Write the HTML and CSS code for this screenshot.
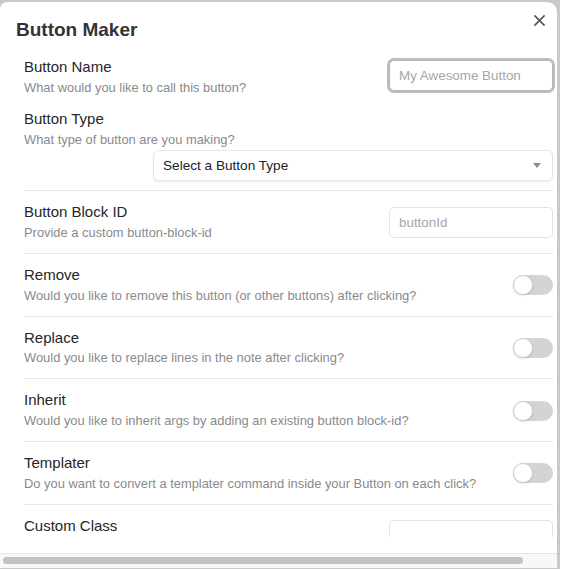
FILE: index.html
```html
<!DOCTYPE html>
<html lang="en">
<head>
<meta charset="utf-8">
<title>Button Maker</title>
<link rel="stylesheet" href="styles.css">
</head>
<body>
<div class="backdrop">
  <div class="modal">
    <button class="close" aria-label="Close">
      <svg viewBox="0 0 12 12" width="11" height="11"><path d="M1 1L11 11M11 1L1 11" stroke="#555" stroke-width="1.8" stroke-linecap="round" fill="none"/></svg>
    </button>
    <h1 class="title">Button Maker</h1>
    <div class="content">
      <div class="setting first">
        <div class="info">
          <div class="name">Button Name</div>
          <div class="desc">What would you like to call this button?</div>
        </div>
        <div class="control"><input class="text focused" type="text" placeholder="My Awesome Button"></div>
      </div>
      <div class="setting wrap">
        <div class="info">
          <div class="name">Button Type</div>
          <div class="desc">What type of button are you making?</div>
        </div>
        <div class="control">
          <div class="dropdown"><span>Select a Button Type</span><span class="arrow"></span></div>
        </div>
      </div>
      <div class="setting">
        <div class="info">
          <div class="name">Button Block ID</div>
          <div class="desc">Provide a custom button-block-id</div>
        </div>
        <div class="control"><input class="text" type="text" placeholder="buttonId"></div>
      </div>
      <div class="setting">
        <div class="info">
          <div class="name">Remove</div>
          <div class="desc">Would you like to remove this button (or other buttons) after clicking?</div>
        </div>
        <div class="control"><div class="toggle"></div></div>
      </div>
      <div class="setting">
        <div class="info">
          <div class="name">Replace</div>
          <div class="desc">Would you like to replace lines in the note after clicking?</div>
        </div>
        <div class="control"><div class="toggle"></div></div>
      </div>
      <div class="setting">
        <div class="info">
          <div class="name">Inherit</div>
          <div class="desc">Would you like to inherit args by adding an existing button block-id?</div>
        </div>
        <div class="control"><div class="toggle"></div></div>
      </div>
      <div class="setting">
        <div class="info">
          <div class="name">Templater</div>
          <div class="desc">Do you want to convert a templater command inside your Button on each click?</div>
        </div>
        <div class="control"><div class="toggle"></div></div>
      </div>
      <div class="setting last">
        <div class="info">
          <div class="name">Custom Class</div>
        </div>
        <div class="control"><input class="text" type="text"></div>
      </div>
    </div>
    <div class="hscroll"><div class="thumb"></div></div>
  </div>
</div>
</body>
</html>
```
FILE: styles.css
```css
html, body {
  margin: 0;
  padding: 0;
  background: #ffffff;
  font-family: "Liberation Sans", Arial, sans-serif;
}

.backdrop {
  width: 560px;
  height: 569px;
  background: #c9c9c9;
  padding-top: 2px;
  box-sizing: border-box;
}

.modal {
  position: relative;
  width: 557px;
  height: 566px;
  background: #ffffff;
  border-radius: 7px 10px 0 0;
  display: flex;
  flex-direction: column;
  overflow: hidden;
}

.close {
  position: absolute;
  top: 13px;
  left: 534px;
  width: 11px;
  height: 11px;
  padding: 0;
  margin: 0;
  border: 0;
  background: none;
  display: flex;
}

.title {
  margin: 16px 0 0 16px;
  font-size: 19px;
  line-height: 23px;
  font-weight: bold;
  color: #333333;
}

.content {
  flex: 1;
  min-height: 0;
  overflow: hidden;
  padding: 17px 4px 0 24px;
  margin-bottom: 16px;
}

.setting {
  display: flex;
  align-items: center;
  border-top: 1px solid #e8e8e8;
  padding: 12px 0 11px;
}

.setting.first {
  border-top: 0;
  padding: 0 0 13px;
}

.setting.wrap {
  border-top: 0;
  padding: 0 0 9.5px;
  flex-wrap: wrap;
}

.setting.wrap .info {
  flex: 0 0 100%;
}

.setting.wrap .control {
  flex: 1;
  justify-content: flex-end;
  margin-top: 1px;
}

.setting.last {
  align-items: flex-start;
}

.setting.last .control {
  margin-top: 3px;
}

.info {
  flex: 1;
  min-width: 0;
}

.name {
  font-size: 15px;
  line-height: 18.75px;
  color: #262626;
}

.desc {
  margin-top: 2px;
  font-size: 12.9px;
  line-height: 18px;
  color: #8a8a8a;
  white-space: nowrap;
}

.control {
  display: flex;
  align-items: center;
  justify-content: flex-end;
}

.text {
  width: 164px;
  height: 31px;
  box-sizing: border-box;
  border: 1px solid #e2e2e2;
  border-radius: 5px;
  padding: 0 9px;
  font-family: "Liberation Sans", Arial, sans-serif;
  font-size: 13.4px;
  color: #222222;
  background: #ffffff;
  outline: none;
  margin: 0;
}

.text::placeholder {
  color: #a6a6a6;
}

.text.focused {
  border-color: #b8b8b8;
  box-shadow: 0 0 0 2px #bdbdbd;
  margin-top: -3px;
}

.dropdown {
  width: 400px;
  height: 31px;
  box-sizing: border-box;
  border-radius: 6px;
  border: 1px solid #e6e6e6;
  box-shadow: 0 1px 2px rgba(0, 0, 0, 0.08);
  padding: 0 11px 0 9px;
  display: flex;
  align-items: center;
  justify-content: space-between;
  font-size: 13.6px;
  color: #222222;
  background: #ffffff;
}

.arrow {
  width: 0;
  height: 0;
  border-left: 4px solid transparent;
  border-right: 4px solid transparent;
  border-top: 5px solid #8c8c8c;
}

.toggle {
  position: relative;
  width: 40px;
  height: 20px;
  border-radius: 10px;
  background: #d4d4d4;
}

.toggle::after {
  content: "";
  position: absolute;
  left: 0;
  top: 0;
  width: 20px;
  height: 20px;
  border-radius: 50%;
  background: #ffffff;
  box-sizing: border-box;
  border: 1px solid #cfcfcf;
  box-shadow: 0 1px 2px rgba(0, 0, 0, 0.12);
}

.hscroll {
  height: 15px;
  box-sizing: border-box;
  border-top: 1px solid #e6e6e6;
  background: #f8f8f8;
  padding: 3px 0 0 3px;
}

.thumb {
  width: 520px;
  height: 7px;
  border-radius: 4px;
  background: #c2c2c2;
}
```
